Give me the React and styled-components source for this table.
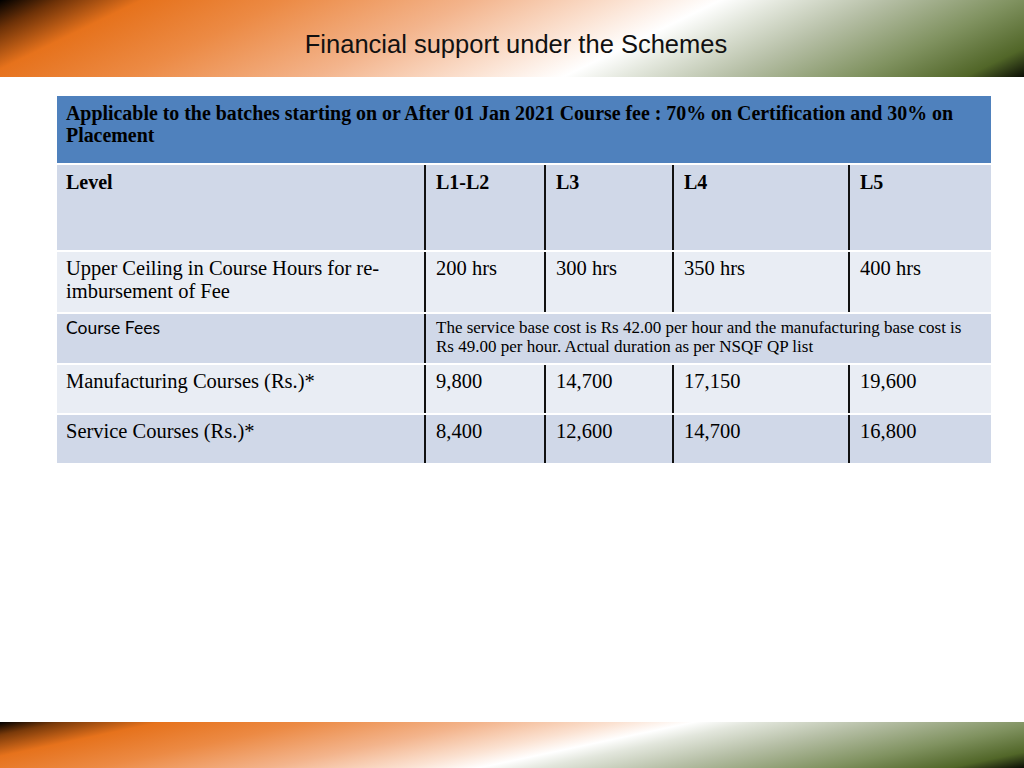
import React from 'react';
import styled, { createGlobalStyle } from 'styled-components';

const GlobalStyle = createGlobalStyle`
  html, body {
    margin: 0;
    padding: 0;
    background: #fff;
  }
  * {
    box-sizing: border-box;
  }
`;

const levels = ['L1-L2', 'L3', 'L4', 'L5'];

const rows = [
  { label: 'Manufacturing Courses (Rs.)*', values: ['9,800', '14,700', '17,150', '19,600'], tone: 'light' },
  { label: 'Service Courses (Rs.)*', values: ['8,400', '12,600', '14,700', '16,800'], tone: 'dark' },
];

function App() {
  return (
    <Page>
      <GlobalStyle />
      <TopBar>
        <Title>Financial support under the Schemes</Title>
      </TopBar>

      <Main>
        <Table>
          <HeadCell>
            Applicable to the batches starting on or After 01 Jan 2021 Course fee : 70% on Certification and 30% on
            Placement
          </HeadCell>

          <Cell tone="dark" $h={85} $first $bold>Level</Cell>
          {levels.map((l) => (
            <Cell key={l} tone="dark" $h={85} $bold>{l}</Cell>
          ))}

          <Cell tone="light" $h={60} $first>Upper Ceiling in Course Hours for re-imbursement of Fee</Cell>
          <Cell tone="light" $h={60}>200 hrs</Cell>
          <Cell tone="light" $h={60}>300 hrs</Cell>
          <Cell tone="light" $h={60}>350 hrs</Cell>
          <Cell tone="light" $h={60}>400 hrs</Cell>

          <Cell tone="dark" $h={49} $first $sans>Course Fees</Cell>
          <NoteCell>
            The service base cost is Rs 42.00 per hour and the manufacturing base cost is Rs 49.00 per hour. Actual
            duration as per NSQF QP list
          </NoteCell>

          {rows.map((r) => (
            <React.Fragment key={r.label}>
              <Cell tone={r.tone} $h={48} $first>{r.label}</Cell>
              {r.values.map((v, i) => (
                <Cell key={i} tone={r.tone} $h={48}>{v}</Cell>
              ))}
            </React.Fragment>
          ))}
        </Table>
      </Main>

      <BottomBar />
    </Page>
  );
}

const Page = styled.div`
  width: 1024px;
  height: 768px;
  display: flex;
  flex-direction: column;
  overflow: hidden;
`;

const TopBar = styled.div`
  height: 77px;
  flex-shrink: 0;
  display: flex;
  align-items: center;
  justify-content: center;
  padding: 12px 0 0 8px;
  background: linear-gradient(
    154deg,
    #000 0%,
    #6e3208 5%,
    #e6721c 12%,
    #ec8a44 24%,
    #f3b48c 40%,
    #fbe2d2 53%,
    #ffffff 61%,
    #e4e8de 66%,
    #b6bfa6 75%,
    #809260 86%,
    #516628 95%,
    #0b0e05 100%
  );
`;

const Title = styled.h1`
  margin: 0;
  font-family: "Liberation Sans", Arial, sans-serif;
  font-weight: 400;
  font-size: 25.5px;
  color: #111;
`;

const Main = styled.div`
  flex: 1;
  padding: 19px 0 0 57px;
`;

const Table = styled.div`
  width: 934px;
  display: grid;
  grid-template-columns: 367px 120px 128px 176px 143px;
  row-gap: 2px;
  background: #fff;
`;

const HeadCell = styled.div`
  grid-column: 1 / -1;
  height: 67px;
  padding: 6px 9px;
  background: #4f81bd;
  font-family: "Liberation Serif", "Times New Roman", serif;
  font-weight: 700;
  font-size: 19.9px;
  line-height: 22px;
  color: #000;
`;

const Cell = styled.div`
  height: ${(p) => p.$h}px;
  padding: ${(p) => (p.$bold ? '6px' : p.$sans ? '2px' : '5px')} 9px 0 ${(p) => (p.$first ? '9px' : '10px')};
  background: ${(p) => (p.tone === 'dark' ? '#d0d8e8' : '#e9edf4')};
  border-left: ${(p) => (p.$first ? 'none' : '2px solid #111')};
  font-family: ${(p) => (p.$sans ? 'Lato, "Noto Sans", sans-serif' : '"Liberation Serif", "Times New Roman", serif')};
  font-weight: ${(p) => (p.$bold ? 700 : 400)};
  font-size: ${(p) => (p.$bold ? '20px' : p.$sans ? '17.5px' : '20.5px')};
  line-height: 23px;
  color: #000;
`;

const NoteCell = styled.div`
  grid-column: 2 / -1;
  height: 49px;
  padding: 4px 10px 0;
  background: #d0d8e8;
  border-left: 2px solid #111;
  font-family: "Liberation Serif", "Times New Roman", serif;
  font-size: 17px;
  line-height: 19px;
  color: #000;
`;

const BottomBar = styled.div`
  height: 46px;
  flex-shrink: 0;
  margin-top: auto;
  background: linear-gradient(
    168deg,
    #000 0%,
    #7a3a0a 5%,
    #e6721c 13%,
    #ec8a44 25%,
    #f3b48c 39%,
    #fbe2d2 50%,
    #ffffff 56%,
    #e2e6dc 61%,
    #b6bfa6 71%,
    #809260 84%,
    #516628 94%,
    #0b0e05 100%
  );
`;

export default App;
